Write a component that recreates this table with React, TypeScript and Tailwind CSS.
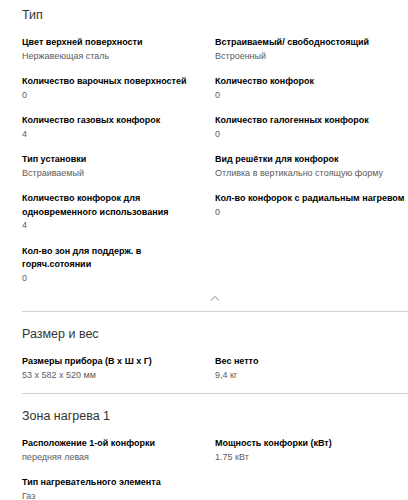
import React from "react";

type Spec = { label: string[]; value: string };

const typeSpecs: Spec[] = [
  { label: ["Цвет верхней поверхности"], value: "Нержавеющая сталь" },
  { label: ["Встраиваемый/ свободностоящий"], value: "Встроенный" },
  { label: ["Количество варочных поверхностей"], value: "0" },
  { label: ["Количество конфорок"], value: "0" },
  { label: ["Количество газовых конфорок"], value: "4" },
  { label: ["Количество галогенных конфорок"], value: "0" },
  { label: ["Тип установки"], value: "Встраиваемый" },
  { label: ["Вид решётки для конфорок"], value: "Отливка в вертикально стоящую форму" },
  { label: ["Количество конфорок для", "одновременного использования"], value: "4" },
  { label: ["Кол-во конфорок с радиальным нагревом"], value: "0" },
  { label: ["Кол-во зон для поддерж. в", "горяч.сотоянии"], value: "0" },
];

const sizeSpecs: Spec[] = [
  { label: ["Размеры прибора (В x Ш x Г)"], value: "53 x 582 x 520 мм" },
  { label: ["Вес нетто"], value: "9,4 кг" },
];

const zoneSpecs: Spec[] = [
  { label: ["Расположение 1-ой конфорки"], value: "передняя левая" },
  { label: ["Мощность конфорки (кВт)"], value: "1.75 кВт" },
  { label: ["Тип нагревательного элемента"], value: "Газ" },
];

function SpecGrid({ items }: { items: Spec[] }) {
  return (
    <div className="grid grid-cols-[193px_1fr] gap-y-[12px]">
      {items.map((s, i) => (
        <div key={i} className="flex flex-col">
          {s.label.map((l, j) => (
            <span key={j} className="text-[9px] font-bold leading-[13.5px] whitespace-nowrap text-black">
              {l}
            </span>
          ))}
          <span className="text-[9px] leading-[13.5px] text-[#5c5c5c]">{s.value}</span>
        </div>
      ))}
    </div>
  );
}

function Section({ title, items, first }: { title: string; items: Spec[]; first?: boolean }) {
  return (
    <section className={first ? "pt-[6px]" : "border-t border-[#d0d0d0] pt-[13px]"}>
      <h3 className="pr-[22px] text-[12.5px] leading-[18px] font-normal text-[#333]">{title}</h3>
      <div className="mt-[12px]">
        <SpecGrid items={items} />
      </div>
    </section>
  );
}

export default function App() {
  return (
    <div
      className="min-h-[500px] bg-white pl-[22px]"
      style={{ fontFamily: '"Liberation Sans", Arial, sans-serif' }}
    >
      <Section title="Тип" items={typeSpecs} first />
      <div className="flex h-[26px] items-center justify-center">
        <svg width="10" height="6" viewBox="0 0 10 6" fill="none" aria-hidden>
          <path d="M1 5.5L5 1.5L9 5.5" stroke="#777" strokeWidth="0.9" />
        </svg>
      </div>
      <div className="pb-[11px]">
        <Section title="Размер и вес" items={sizeSpecs} />
      </div>
      <Section title="Зона нагрева 1" items={zoneSpecs} />
    </div>
  );
}
